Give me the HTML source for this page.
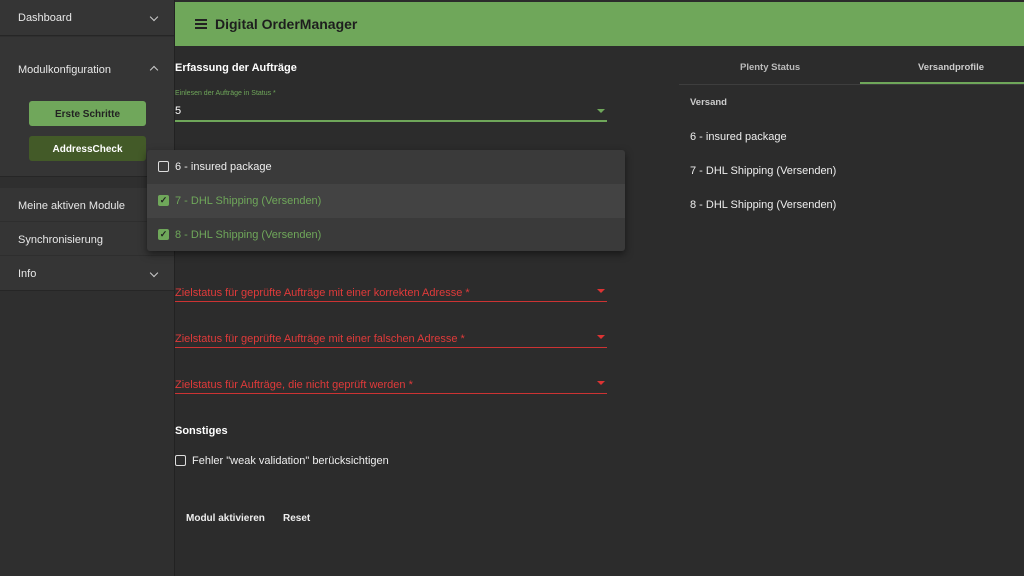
<!DOCTYPE html>
<html><head><meta charset="utf-8"><style>
*{box-sizing:border-box;margin:0;padding:0}
body{width:1024px;height:576px;overflow:hidden;background:#2c2c2c;font-family:"Liberation Sans",sans-serif;color:#eee;position:relative}
.abs{position:absolute}
.side{left:0;top:0;width:175px;height:576px;background:#2f2f2f;border-right:1px solid #222}
.sec{position:absolute;left:0;width:174px;background:#353535;border-bottom:1px solid #262626;font-size:11px;color:#e8e8e8}
.sec span{position:absolute;left:18px}
.chev{position:absolute;right:17px;width:6px;height:6px;border-right:1.5px solid #ccc;border-bottom:1.5px solid #ccc;transform:rotate(45deg)}
.up{transform:rotate(-135deg)}
.btn{position:absolute;left:29px;width:117px;height:25px;border-radius:3px;font-size:10px;font-weight:bold;text-align:center;line-height:27px}
.hdr{left:175px;top:0;width:849px;height:46px;background:#6fa75a;border-top:2px solid #2b2b2b}
.lbl{font-size:11px;color:#fff;font-weight:bold}
.field{position:absolute;left:175px;width:432px;border-bottom:1.5px solid #c33}
.red{color:#e03a3a;font-size:11px}
.tri{position:absolute;right:2px;width:0;height:0;border-left:4px solid transparent;border-right:4px solid transparent}
.cb{position:absolute;width:11px;height:11px;border:1.5px solid #ddd;border-radius:2px}
.cbg{position:absolute;width:11px;height:11px;background:#6fa75a;border-radius:2px;color:#222;font-size:9px;line-height:11px;text-align:center;font-weight:bold}
</style></head><body>
<div class="abs side"></div>
<div class="sec" style="top:0;height:36px"><span style="top:12px">Dashboard</span><i class="chev" style="top:14px"></i></div>
<div class="sec" style="top:37px;height:140px"><span style="top:27px">Modulkonfiguration</span><i class="chev up" style="top:30px"></i></div>
<div class="btn" style="top:101px;background:#70a75b;color:#222">Erste Schritte</div>
<div class="btn" style="top:136px;background:#435a28;color:#fff">AddressCheck</div>
<div class="sec" style="top:188px;height:34px;border-bottom:1px solid #2e2e2e"><span style="top:12px">Meine aktiven Module</span></div>
<div class="sec" style="top:222px;height:34px;border-bottom:1px solid #2e2e2e"><span style="top:12px">Synchronisierung</span></div>
<div class="sec" style="top:256px;height:35px"><span style="top:12px">Info</span><i class="chev" style="top:14px"></i></div>

<div class="abs hdr"><div class="abs" style="left:20px;top:17px;width:12px"><div style="height:1.5px;background:#222;margin-bottom:2.5px"></div><div style="height:1.5px;background:#222;margin-bottom:2.5px"></div><div style="height:1.5px;background:#222"></div></div><div class="abs" style="left:40px;top:14px;font-size:14px;color:#1e1e1e;font-weight:bold">Digital OrderManager</div></div>

<div class="abs lbl" style="left:175px;top:62px">Erfassung der Aufträge</div>
<div class="abs" style="left:175px;top:90px;font-size:7px;color:#6fa75a">Einlesen der Aufträge in Status *</div>
<div class="abs" style="left:175px;top:105px;font-size:11px;color:#fff">5</div>
<div class="abs" style="left:175px;top:120px;width:432px;height:2px;background:#6fa75a"></div>
<div class="tri" style="left:597px;top:109px;border-top:4px solid #6fa75a"></div>

<div class="field" style="top:283px;height:19px"><span class="red">Zielstatus für geprüfte Aufträge mit einer korrekten Adresse *</span><i class="tri" style="top:6px;border-top:4px solid #d33"></i></div>
<div class="field" style="top:329px;height:19px"><span class="red">Zielstatus für geprüfte Aufträge mit einer falschen Adresse *</span><i class="tri" style="top:6px;border-top:4px solid #d33"></i></div>
<div class="field" style="top:375px;height:19px"><span class="red">Zielstatus für Aufträge, die nicht geprüft werden *</span><i class="tri" style="top:6px;border-top:4px solid #d33"></i></div>

<div class="abs lbl" style="left:175px;top:425px">Sonstiges</div>
<div class="cb" style="left:175px;top:455px"></div>
<div class="abs" style="left:192px;top:455px;font-size:11px;color:#eee">Fehler "weak validation" berücksichtigen</div>
<div class="abs" style="left:186px;top:513px;font-size:10px;font-weight:bold;color:#eee">Modul aktivieren</div>
<div class="abs" style="left:283px;top:513px;font-size:10px;font-weight:bold;color:#eee">Reset</div>

<div class="abs" style="left:147px;top:150px;width:478px;height:101px;background:#3a3a3a;border-radius:3px;box-shadow:0 3px 8px rgba(0,0,0,.5)">
<div class="abs" style="left:0;top:34px;width:478px;height:34px;background:#434343"></div>
<div class="cb" style="left:11px;top:11px"></div>
<div class="abs" style="left:28px;top:11px;font-size:11px;color:#eee">6 - insured package</div>
<div class="cbg" style="left:11px;top:45px">✓</div>
<div class="abs" style="left:28px;top:45px;font-size:11px;color:#6fa75a">7 - DHL Shipping (Versenden)</div>
<div class="cbg" style="left:11px;top:79px">✓</div>
<div class="abs" style="left:28px;top:79px;font-size:11px;color:#6fa75a">8 - DHL Shipping (Versenden)</div>
</div>

<div class="abs" style="left:679px;top:84px;width:345px;height:1px;background:#3e3e3e"></div>
<div class="abs" style="left:860px;top:82px;width:164px;height:2px;background:#6fa75a"></div>
<div class="abs" style="left:740px;top:62px;font-size:9.5px;font-weight:bold;color:#bbb">Plenty Status</div>
<div class="abs" style="left:918px;top:62px;font-size:9.5px;font-weight:bold;color:#ccc">Versandprofile</div>
<div class="abs" style="left:690px;top:97px;font-size:9.5px;font-weight:bold;color:#ccc">Versand</div>
<div class="abs" style="left:690px;top:131px;font-size:11px;color:#eee">6 - insured package</div>
<div class="abs" style="left:690px;top:165px;font-size:11px;color:#eee">7 - DHL Shipping (Versenden)</div>
<div class="abs" style="left:690px;top:199px;font-size:11px;color:#eee">8 - DHL Shipping (Versenden)</div>
</body></html>
